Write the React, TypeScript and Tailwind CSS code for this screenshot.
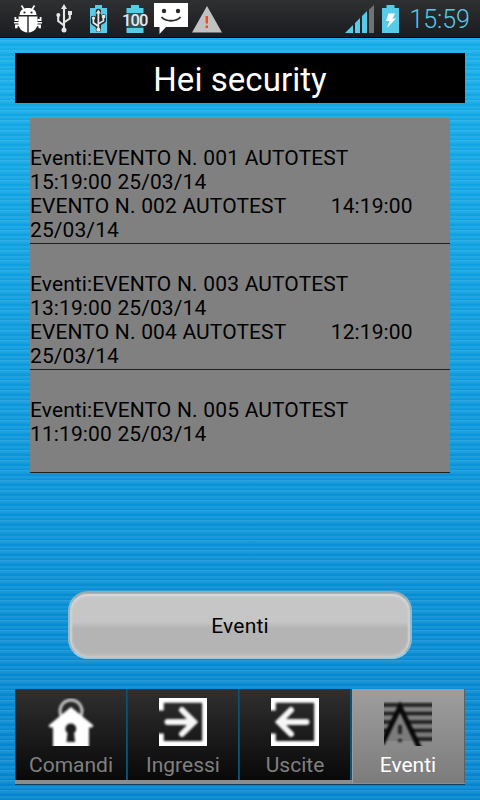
import React from "react";
import clsx from "clsx";

interface TabItem {
  label: string;
  icon: React.ReactNode;
}

const EVENTS = [
  "\nEventi:EVENTO N. 001 AUTOTEST\n15:19:00 25/03/14\nEVENTO N. 002 AUTOTEST        14:19:00\n25/03/14",
  "\nEventi:EVENTO N. 003 AUTOTEST\n13:19:00 25/03/14\nEVENTO N. 004 AUTOTEST        12:19:00\n25/03/14",
  "\nEventi:EVENTO N. 005 AUTOTEST\n11:19:00 25/03/14\n ",
];

function BugIcon() {
  return (
    <svg className="h-[28px] w-[28px] shrink-0" viewBox="0 0 28 28" fill="#fff">
      <path d="M7.500 0.500l2.500 4M20.500 0.500L18 4.500" stroke="#fff" strokeWidth="1.600" />
      <path d="M5.500 10C6 5 9 3 14 3s8 2 8.500 7z" />
      <path d="M4.500 11.500h8.800v16C8 27 4.500 23.500 4.500 18zM14.700 11.500h8.800V18c0 5.500-3.500 9-8.800 9.500z" />
      <path d="M0.500 12h1.800v2h2.200v2H0.500zM27.500 12h-1.800v2h-2.200v2h4zM0 17h5v1.500H0zM23 17h5v1.500h-5zM1 19.500h4v1.800H3.500v2H1zM27 19.500h-4v1.800h1.500v2H27z" />
      <circle cx="10.500" cy="7.500" r="1.100" fill="#28292b" />
      <circle cx="17.500" cy="7.500" r="1.100" fill="#28292b" />
    </svg>
  );
}

function UsbGlyph({ outline = false }: { outline?: boolean }) {
  return (
    <g>
      {outline && (
        <path d="M8 2v24M8 21.500L2.200 17v-6M8 18.500l5.800-4V9" fill="none" stroke="#20292c" strokeWidth="6" strokeLinejoin="round" strokeLinecap="round" />
      )}
      <path d="M8 3v24M8 21.500L2.200 17v-6M8 18.500l5.800-4V9" fill="none" stroke="#e6e6e6" strokeWidth="2.100" />
      <path d="M8 0l3 5H5z" fill="#e6e6e6" />
      <circle cx="8" cy="26" r="2.500" fill="#e6e6e6" />
      <circle cx="2.300" cy="11" r="2" fill="#e6e6e6" />
      <path d="M12 7h4v4h-4z" fill="#e6e6e6" />
    </g>
  );
}

function StatusBar() {
  return (
    <header className="flex h-[38px] items-start border-b border-black bg-linear-to-b from-[#2e3032] to-[#1b1c1f] pl-[13.500px]">
      <div className="pt-[5px]">
        <BugIcon />
      </div>
      <svg className="mt-[4px] ml-[14px] h-[29px] w-[17px] shrink-0" viewBox="0 0 17 29">
        <UsbGlyph />
      </svg>
      <svg className="mt-[5px] ml-[16.500px] h-[28px] w-[19px] shrink-0" viewBox="0 0 19 28">
        <path d="M1 3h5V0h7v3h5v25H1z" fill="#5acbe6" />
        <g transform="translate(2.500 4.500) scale(.86 .78)">
          <UsbGlyph outline />
        </g>
      </svg>
      <div className="relative mt-[5px] ml-[13px] h-[28px] w-[28px] shrink-0">
        <svg className="h-[28px] w-[28px]" viewBox="0 0 28 28">
          <path d="M5.500 3H10V0h8v3h4.500v25h-17z" fill="#5acbe6" />
          <path d="M4 8h22v15H4zM2 9h3v4H2z" fill="#252729" opacity="0.75" />
        </svg>
        <span className="absolute top-[6px] left-[1px] text-[16.500px]/[20px] font-medium tracking-[-0.900px] text-[#e8e8e8]">100</span>
      </div>
      <svg className="mt-[3px] ml-[4.500px] h-[31px] w-[34px] shrink-0" viewBox="0 0 34 31">
        <path d="M0 0h34v24H12l-6.500 7v-7H0z" fill="#fff" />
        <circle cx="10" cy="8" r="2.200" fill="#292a2c" />
        <circle cx="24" cy="8" r="2.200" fill="#292a2c" />
        <path d="M7.500 14c4 5 15 5 19 0" fill="none" stroke="#292a2c" strokeWidth="1.800" />
      </svg>
      <svg className="mt-[6px] ml-[4px] h-[27px] w-[30px] shrink-0" viewBox="0 0 30 27">
        <path d="M15 0l15 26.500H0z" fill="#c2c2c2" />
        <path d="M14.800 10v7.500M14.800 19.500v2.500" stroke="#f24a1d" strokeWidth="2.400" />
      </svg>
      <svg className="mt-[5px] ml-auto h-[28px] w-[29px] shrink-0" viewBox="0 0 29 28">
        <path d="M0 28l8-8v8zM10 18l5-5v15h-5zM17 11l5-5v22h-5z" fill="#5acbe6" />
        <path d="M24 4.500L29 0v28h-5z" fill="#727272" />
      </svg>
      <svg className="mt-[5px] ml-[8px] h-[28px] w-[17px] shrink-0" viewBox="0 0 17 28">
        <path d="M0 3h4.500V0h8v3H17v25H0z" fill="#5acbe6" />
        <path d="M6.500 8.500H13l-2.500 5H14L5 23l2.500-7H4z" fill="#fff" />
      </svg>
      <time className="mt-[5px] ml-[10.500px] w-[70.500px] text-[25px]/[30px] font-light tracking-[-0.100px] text-[#5acbe6]">15:59</time>
    </header>
  );
}

function LockHouseIcon() {
  return (
    <svg className="h-[48px] w-[48px]" viewBox="0 0 48 48">
      <g className="blur-[0.8px]">
        <circle cx="24" cy="13" r="11" fill="none" stroke="#c4c4c4" strokeWidth="3" />
        <path d="M24 9l22.500 18.500-1.500 2h-3V52H6V29.500H3l-1.500-2z" fill="#fff" />
        <path d="M23.800 25.500a5.300 5.300 0 00-3.300 9.500l-1 9h8.600l-1-9a5.300 5.300 0 00-3.300-9.500z" fill="#1d1d1d" />
      </g>
    </svg>
  );
}

function ArrowBoxIcon({ flip = false }: { flip?: boolean }) {
  return (
    <svg className="h-[48px] w-[48px]" viewBox="0 0 48 48">
      <g className="blur-[0.8px]">
        <path d="M-4-4h56v56H-4V35.500h8.800V43h38.400V4.800H4.800v7.700H-4z" fill="#fff" />
        <path
          d={flip ? "M35.500 24H8M20 12L8 24l12 12" : "M8.500 24H35M23 12l12 12-12 12"}
          fill="none"
          stroke="#f6f6f6"
          strokeWidth="6"
          strokeLinecap="round"
        />
      </g>
    </svg>
  );
}

function WarningLinesIcon() {
  return (
    <svg className="h-[48px] w-[48px]" viewBox="0 0 48 48">
      <path d="M0 4h48v39H0z" fill="#000" opacity="0.12" />
      <g className="blur-[0.8px]">
        <path d="M-3 7h54M-3 15.500h15M20 15.500h31M-3 24H8M24 24h27M-3 32.500h7M28 32.500h23M32 41h19" stroke="#1c1c1c" strokeWidth="3.600" />
        <path d="M-2 46L16 9l20 42" fill="none" stroke="#080808" strokeWidth="5" />
        <path d="M16 27v9M16 41v3" stroke="#262626" strokeWidth="4" />
      </g>
    </svg>
  );
}

const TABS: TabItem[] = [
  { label: "Comandi", icon: <LockHouseIcon /> },
  { label: "Ingressi", icon: <ArrowBoxIcon /> },
  { label: "Uscite", icon: <ArrowBoxIcon flip /> },
  { label: "Eventi", icon: <WarningLinesIcon /> },
];

function TabBar({ active }: { active: string }) {
  return (
    <nav className="mx-[15px] mt-[30px] h-[96px] border-b border-[#12405c] bg-[#8c8c8c]">
      <div className="grid h-[91px] grid-cols-[112px_112px_112px_114px] grid-rows-[91px] bg-[#0b5478]">
        {TABS.map((tab) => {
          const selected = tab.label === active;
          return (
            <button
              key={tab.label}
              className={clsx(
                "flex flex-col items-center border-l pt-[9px]",
                selected
                  ? "ml-px h-[94px] border-r border-l-[#9c9c9c] border-r-[#606060] bg-linear-to-b from-[#9e9e9e] to-[#7c7c7c] pr-px text-white"
                  : "mr-px border-[#3a3a3a] bg-linear-to-b from-[#303030] to-[#090909] text-[#808080]"
              )}
            >
              {tab.icon}
              <span className="mt-[7px] text-[21px]/[25px]">{tab.label}</span>
            </button>
          );
        })}
      </div>
    </nav>
  );
}

export default function App() {
  return (
    <div className="h-[800px] w-[480px] overflow-hidden bg-[repeating-linear-gradient(to_bottom,#ffffff28_0px,#ffffff28_1px,#ffffff1c_1px,#ffffff16_3px,#ffffff04_4px,#ffffff04_6px,#ffffff18_6px,#ffffff18_8px,#ffffff04_9px,#ffffff04_10px),linear-gradient(to_bottom,#10adea_0px,#0086d0_700px,#0084ce_800px)] font-[Roboto,sans-serif]">
      <StatusBar />
      <h1 className="mx-[15px] mt-[15px] h-[50px] bg-black text-center text-[33px]/[53px] tracking-[0.05px] text-white">
        Hei security
      </h1>
      <ul className="mx-[30px] mt-[15px] bg-[#808080] text-[21px]/[24px] tracking-[0.1px] text-black [word-spacing:0.3px]">
        {EVENTS.map((event, i) => (
          <li key={i} className={clsx("border-b border-[#202020] pt-[4px] whitespace-pre", i === 2 ? "h-[103px]" : "h-[126px]")}>
            {event}
          </li>
        ))}
      </ul>
      <button className="mx-[68px] mt-[118px] block h-[68px] w-[344px] rounded-[20px] border-2 border-t-[#93a9b4] border-r-[#93b9cc] border-b-[#9ccbe2] border-l-[#93b9cc] bg-linear-to-b from-[#c6c6c6] from-45% to-[#b4b4b4] to-55% pt-[3px] text-[21px] tracking-[0.2px] text-black shadow-[inset_0_1px_1px_#aaaaaa,inset_0_3px_2px_#dedede,inset_2px_0_2px_#d0d0d0,inset_-2px_0_2px_#d0d0d0,inset_0_-2px_4px_#c4c4c4]">
        Eventi
      </button>
      <TabBar active="Eventi" />
    </div>
  );
}
